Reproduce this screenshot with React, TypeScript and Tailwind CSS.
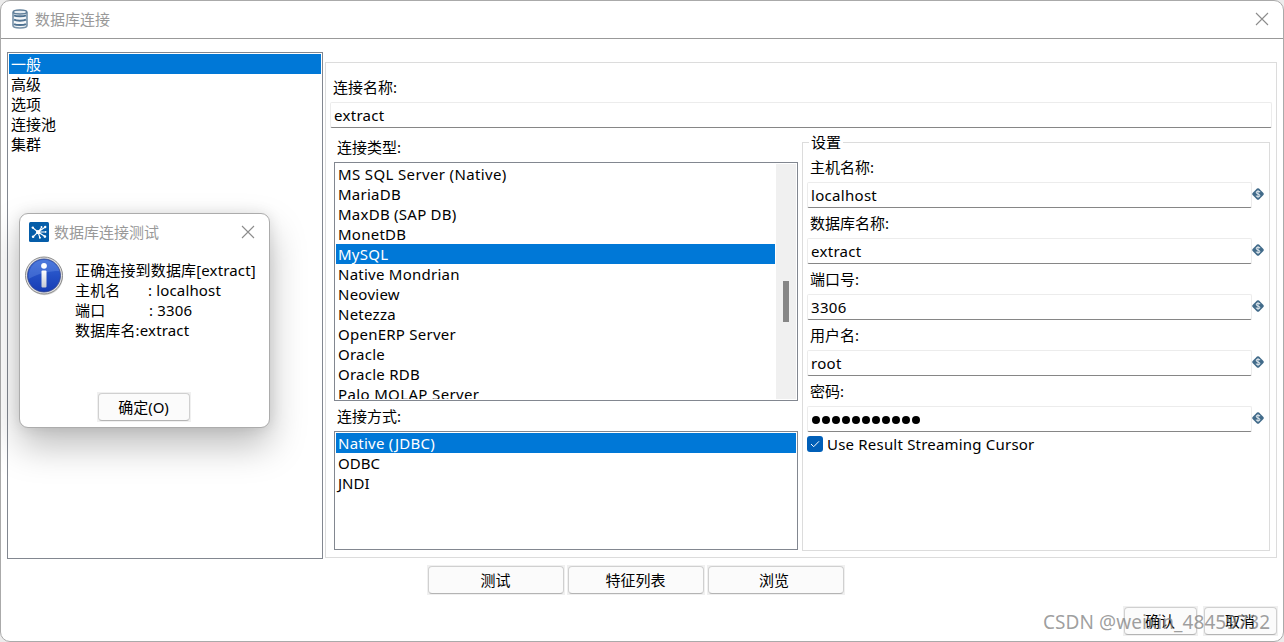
import React from 'react';

const categories = ['一般', '高级', '选项', '连接池', '集群'];

const databaseTypes = [
  'MS SQL Server (Native)',
  'MariaDB',
  'MaxDB (SAP DB)',
  'MonetDB',
  'MySQL',
  'Native Mondrian',
  'Neoview',
  'Netezza',
  'OpenERP Server',
  'Oracle',
  'Oracle RDB',
  'Palo MOLAP Server',
];

const accessTypes = ['Native (JDBC)', 'ODBC', 'JNDI'];

const settings = [
  { label: '主机名称:', value: 'localhost' },
  { label: '数据库名称:', value: 'extract' },
  { label: '端口号:', value: '3306' },
  { label: '用户名:', value: 'root' },
  { label: '密码:', value: '', dots: 11 },
];

interface ListProps {
  items: string[];
  selected: string;
}

const List: React.FC<ListProps> = ({ items, selected }) => (
  <ul className="min-w-0 flex-1">
    {items.map(item => (
      <li
        key={item}
        className={`h-5 pl-[2px] leading-5 whitespace-pre ${item.length > 16 ? 'tracking-[0.36px]' : item.length > 4 ? 'tracking-[0.25px]' : ''} ${item === selected ? 'bg-[#0078d7] text-white' : ''}`}
      >
        {item}
      </li>
    ))}
  </ul>
);

const Button: React.FC<{ className: string; children: React.ReactNode }> = ({ className, children }) => (
  <div className={`h-[30px] bg-[#f0f0f0] p-px ${className}`}>
    <button className="flex h-7 w-full items-center justify-center rounded-[4px] border border-[#d0d0d0] border-b-[#b4b4b4] bg-[#fbfbfb] pr-px leading-5">
      {children}
    </button>
  </div>
);

const inputStyle = 'h-[26px] rounded-[2px] border border-[#ececec] border-b-[#868686] bg-white pl-[3px] leading-[25px] tracking-[0.3px]';

const DatabaseIcon = () => (
  <svg width="16" height="20" viewBox="0 0 16 20" fill="none">
    <path d="M1 3.300v13.200c0 1.500 3 2.500 7 2.500s7-1 7-2.500V3.300" fill="#f5f7f9" stroke="#7590a7" strokeWidth="1.600" />
    <path d="M2 6.300c1.200.7 3.300 1 6 1s4.800-.3 6-1M2 10.700c1.200.7 3.300 1 6 1s4.800-.3 6-1M2 15.100c1.200.7 3.300 1 6 1s4.800-.3 6-1" stroke="#4e7190" strokeWidth="2" />
    <ellipse cx="8" cy="3" rx="6.800" ry="2" fill="#e7edf2" stroke="#5f7e99" strokeWidth="1.600" />
  </svg>
);

const CloseIcon = () => (
  <svg width="14" height="14" viewBox="0 0 14 14" stroke="#8c8c8c" strokeWidth="1.1">
    <path d="M1 1l12 12M13 1L1 13" />
  </svg>
);

const VariableIcon = () => (
  <svg className="-mt-[2px]" width="12" height="12" viewBox="0 0 12 12" fill="none">
    <path d="M5 .6Q6-.3 7 .6L11.400 5Q12.200 6 11.400 7L7 11.400Q6 12.300 5 11.400L.6 7Q-.2 6 .6 5Z" fill="#426b8a" />
    <path d="M8 4.200C7.500 2.800 4.200 2.800 4.200 4.500c0 1.600 3.700 1.300 3.700 3 0 1.700-3.400 1.700-3.900.2M6 2v8" stroke="#d5dfe6" strokeWidth="1.100" />
  </svg>
);

const AppIcon = () => (
  <svg width="20" height="20" viewBox="0 0 20 20">
    <rect width="20" height="20" rx="1.500" fill="#055da9" />
    <g stroke="#fff" strokeWidth="1.100" fill="none">
      <path d="M3.800 5.800l5.200 4.200L16 5.200M9 10l4-5M9 10h8M9 10L4 14.800M9 10l2 6M9 10l7 4.500" />
    </g>
    <g fill="#fff">
      <circle cx="3.800" cy="5.600" r="1.200" />
      <circle cx="12.500" cy="5" r=".9" />
      <circle cx="16.200" cy="5" r="1.200" />
      <circle cx="16.700" cy="9.900" r=".8" />
      <circle cx="4.100" cy="14.700" r="1.300" />
      <circle cx="10.900" cy="15.700" r="1" />
      <circle cx="15.900" cy="14.600" r="1.300" />
      <circle cx="9" cy="10" r="2.100" />
    </g>
  </svg>
);

const InfoIcon = () => (
  <svg width="40" height="40" viewBox="0 0 40 40">
    <defs>
      <linearGradient id="ball" x1="0" y1="0" x2="0" y2="1">
        <stop offset="0" stopColor="#3969d5" />
        <stop offset="0.5" stopColor="#2450c5" />
        <stop offset="1" stopColor="#163cb4" />
      </linearGradient>
      <linearGradient id="stem" x1="0" y1="0" x2="0" y2="1">
        <stop offset="0" stopColor="#ffffff" />
        <stop offset="1" stopColor="#c5c9d4" />
      </linearGradient>
    </defs>
    <circle cx="20.500" cy="20.700" r="18.500" fill="#000" opacity=".15" />
    <circle cx="20" cy="19.500" r="18.500" fill="#e2e2e2" stroke="#8b8b8b" strokeWidth="1" />
    <circle cx="20" cy="19.500" r="16.500" fill="url(#ball)" stroke="#34458b" strokeWidth=".8" />
    <path d="M4.500 23C4 10 12 4 20 4s14 5 15.300 11C26 15 15 17 4.500 23Z" fill="#7da1ef" opacity=".3" />
    <circle cx="20" cy="9.800" r="2.900" fill="#fff" />
    <rect x="17.500" y="14.500" width="5" height="17" rx="1" fill="url(#stem)" />
  </svg>
);

const TestDialog = () => (
  <div className="absolute top-[212px] left-[18px] h-[215px] w-[251px] rounded-[9px] border border-[#acacac] bg-white shadow-[0_18px_36px_rgba(0,0,0,0.26),0_0_14px_rgba(0,0,0,0.10)]">
    <div className="flex h-[36px] items-center pr-[14px] pl-[9px] text-[#999]">
      <AppIcon />
      <span className="mt-px ml-[5px] flex-1">数据库连接测试</span>
      <CloseIcon />
    </div>
    <div className="flex h-[142px] pt-[6px] pl-1">
      <InfoIcon />
      <div className="ml-[11px] pt-1 leading-5 tracking-[0.15px] whitespace-pre">
        <p>正确连接到数据库[extract]</p>
        <p className="flex"><span className="w-[73px]">主机名</span>: localhost</p>
        <p className="flex"><span className="w-[74px]">端口</span>: 3306</p>
        <p>数据库名:extract</p>
      </div>
    </div>
    <Button className="ml-[77px] w-[94px]">确定(O)</Button>
  </div>
);

const App: React.FC = () => {
  return (
    <div className="h-[642px] w-[1284px] overflow-hidden bg-[#ececec] font-['Noto_Sans','Noto_Sans_CJK_SC',sans-serif] text-[15px] text-black">
      <div className="relative flex h-full flex-col rounded-[10px] border border-[#aaa] bg-white">
        {/* Title bar */}
        <header className="flex h-[38px] shrink-0 items-center border-b border-[#999] pr-[14px] pb-[2px] pl-[11px] text-[#999]">
          <DatabaseIcon />
          <span className="mt-px ml-[7px] flex-1">数据库连接</span>
          <CloseIcon />
        </header>

        <main className="flex h-[520px] shrink-0 pt-[13px] pr-[6px] pl-[6px]">
          {/* Categories */}
          <nav className="flex h-[507px] w-[316px] border border-[#828790] p-px">
            <List items={categories} selected="一般" />
          </nav>

          <section className="mt-[10px] ml-[2px] h-[496px] w-[952px] border border-[#dcdcdc]">
            <div className="pt-[14px] pl-1">
              <label className="block h-[25px] pl-[3px] leading-5">连接名称:</label>
              <div className={`w-[942px] ${inputStyle}`}>extract</div>
            </div>

            <div className="flex pl-2">
              <div className="w-[464px]">
                <label className="block h-[34px] pt-[9px] pl-[3px] leading-5">连接类型:</label>
                <div className="flex h-[239px] border border-[#828790] p-px">
                  <div className="flex h-[235px] flex-1 overflow-hidden">
                    <List items={databaseTypes} selected="MySQL" />
                  </div>
                  <div className="ml-px w-5 bg-[#f0f0f0] pt-[117px] pl-[7px]">
                    <div className="h-[41px] w-[6px] bg-[#868686]" />
                  </div>
                </div>
                <label className="block h-[30px] pt-[5px] pl-[3px] leading-5">连接方式:</label>
                <div className="flex h-[119px] border border-[#828790] p-px">
                  <List items={accessTypes} selected="Native (JDBC)" />
                </div>
              </div>

              {/* Settings */}
              <fieldset className="mt-1 ml-1 h-[419px] w-[468px] border border-[#dcdcdc] pl-1">
                <legend className="ml-[2px] h-5 px-[2px] leading-5">设置</legend>
                <div className="h-[284px] pt-1">
                  {settings.map(field => (
                    <div key={field.label} className="h-[56px]">
                      <label className="block h-[26px] pt-px pl-[3px] leading-5">{field.label}</label>
                      <div className="flex items-center">
                        <div className={`flex w-[445px] items-center ${inputStyle}`}>
                          {field.dots ? (
                            <span className="flex gap-[2.500px] pt-[2px] pl-px">
                              {Array.from({ length: field.dots }, (_, i) => (
                                <i key={i} className="h-[7.500px] w-[7.500px] rounded-full bg-black" />
                              ))}
                            </span>
                          ) : (
                            field.value
                          )}
                        </div>
                        <VariableIcon />
                      </div>
                    </div>
                  ))}
                </div>
                <label className="-mt-[2px] flex h-5 items-center leading-5 tracking-[0.2px]">
                  <span className="mr-1 flex h-4 w-4 items-center justify-center rounded-[3px] bg-[#005fb8]">
                    <svg width="10" height="10" viewBox="0 0 10 10" fill="none" stroke="#fff" strokeWidth="1">
                      <path d="M1 5l2.700 2.700L9 2.300" />
                    </svg>
                  </span>
                  Use Result Streaming Cursor
                </label>
              </fieldset>
            </div>
          </section>
        </main>

        <div className="mt-[6px] flex gap-[2px] pl-[426px]">
          <Button className="w-[138px]">测试</Button>
          <Button className="w-[138px]">特征列表</Button>
          <Button className="w-[138px]"><span className="pr-[3px]">浏览</span></Button>
        </div>

        <footer className="mt-[11px] flex justify-end gap-[5px] pr-[5px]">
          <Button className="w-[75px]">确认</Button>
          <Button className="w-[75px]">取消</Button>
        </footer>

        <TestDialog />

        {/* Watermark */}
        <div className="absolute top-[609px] left-[1042px] text-[19px] leading-6 tracking-[0.08px] whitespace-nowrap text-[#808080]/75">
          CSDN @weixin_48459732
        </div>
      </div>
    </div>
  );
};

export default App;
